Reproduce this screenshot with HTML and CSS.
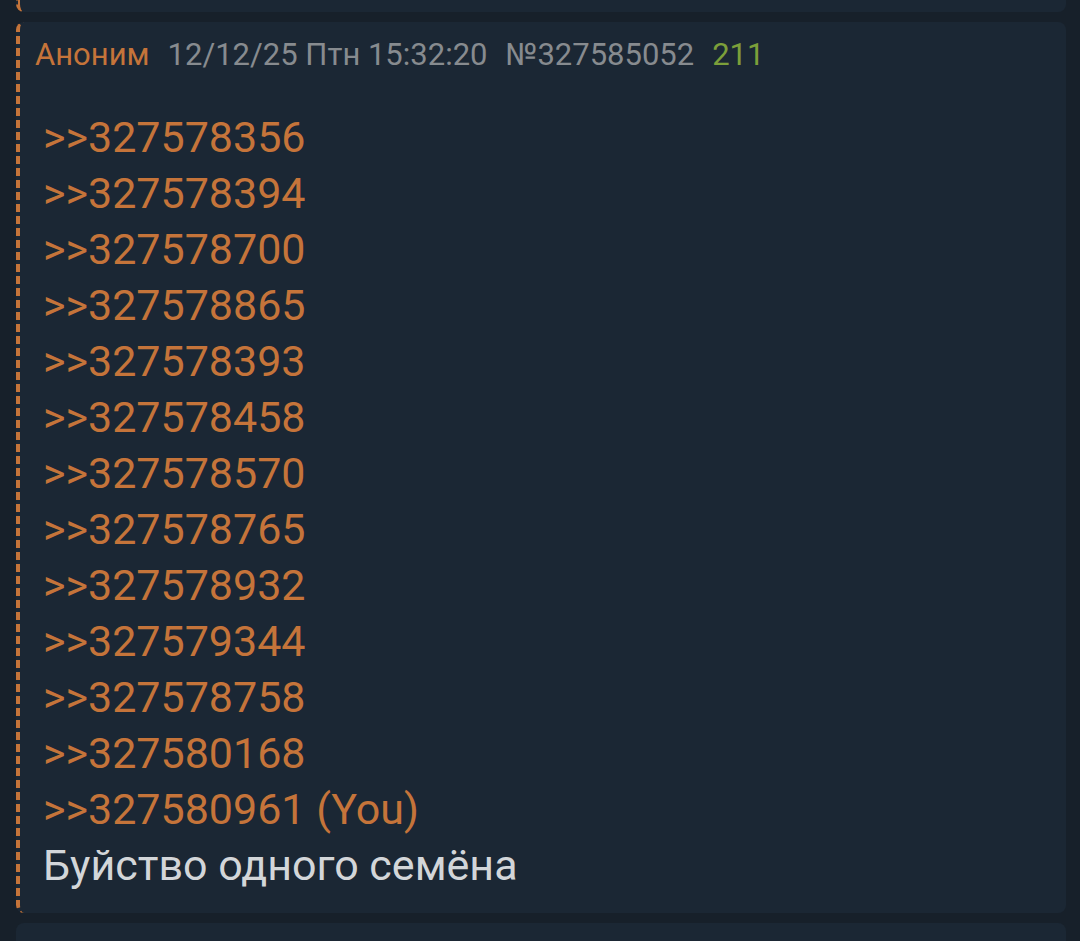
FILE: index.html
```html
<!DOCTYPE html>
<html lang="ru">
<head>
<meta charset="utf-8">
<link rel="stylesheet" href="styles.css">
</head>
<body>
<div class="page">
  <div class="card card-prev"></div>
  <div class="card post">
    <div class="post-head">
      <span class="name">Аноним</span>
      <span class="date">12/12/25 Птн 15:32:20</span>
      <span class="num">№327585052</span>
      <span class="count">211</span>
    </div>
    <div class="post-body">
      <div class="reply">&gt;&gt;327578356</div>
      <div class="reply">&gt;&gt;327578394</div>
      <div class="reply">&gt;&gt;327578700</div>
      <div class="reply">&gt;&gt;327578865</div>
      <div class="reply">&gt;&gt;327578393</div>
      <div class="reply">&gt;&gt;327578458</div>
      <div class="reply">&gt;&gt;327578570</div>
      <div class="reply">&gt;&gt;327578765</div>
      <div class="reply">&gt;&gt;327578932</div>
      <div class="reply">&gt;&gt;327579344</div>
      <div class="reply">&gt;&gt;327578758</div>
      <div class="reply">&gt;&gt;327580168</div>
      <div class="reply">&gt;&gt;327580961 (You)</div>
      <div class="text">Буйство одного семёна</div>
    </div>
  </div>
  <div class="card card-next"></div>
</div>
</body>
</html>
```

FILE: styles.css
```css
html, body {
  margin: 0;
  padding: 0;
  background: #17202a;
  height: 941px;
  overflow: hidden;
}
.page {
  display: flex;
  flex-direction: column;
  gap: 10px;
  padding-left: 16px;
  width: 1050px;
  font-family: Roboto, "Noto Sans", sans-serif;
}
.card {
  background: #1b2734;
  border-radius: 8px;
}
.card-prev {
  height: 12px;
  border-radius: 0 0 8px 8px;
  border-left: 4px dashed #c5743a;
}
.post {
  border-left: 4px dashed #c5743a;
  padding: 15px 0 20px 0;
}
.card-next {
  height: 20px;
  border-radius: 8px 8px 0 0;
}
.post-head {
  display: flex;
  align-items: center;
  gap: 18px;
  height: 34px;
  padding-left: 15px;
  font-size: 31px;
  color: #878b8f;
}
.name { color: #c5743a; }
.count { color: #7c9f3a; }
.post-body {
  margin-top: 38px;
  padding-left: 23px;
  font-size: 43px;
  line-height: 56px;
}
.reply { color: #c5743a; }
.text { color: #d3d6d9; }
```
